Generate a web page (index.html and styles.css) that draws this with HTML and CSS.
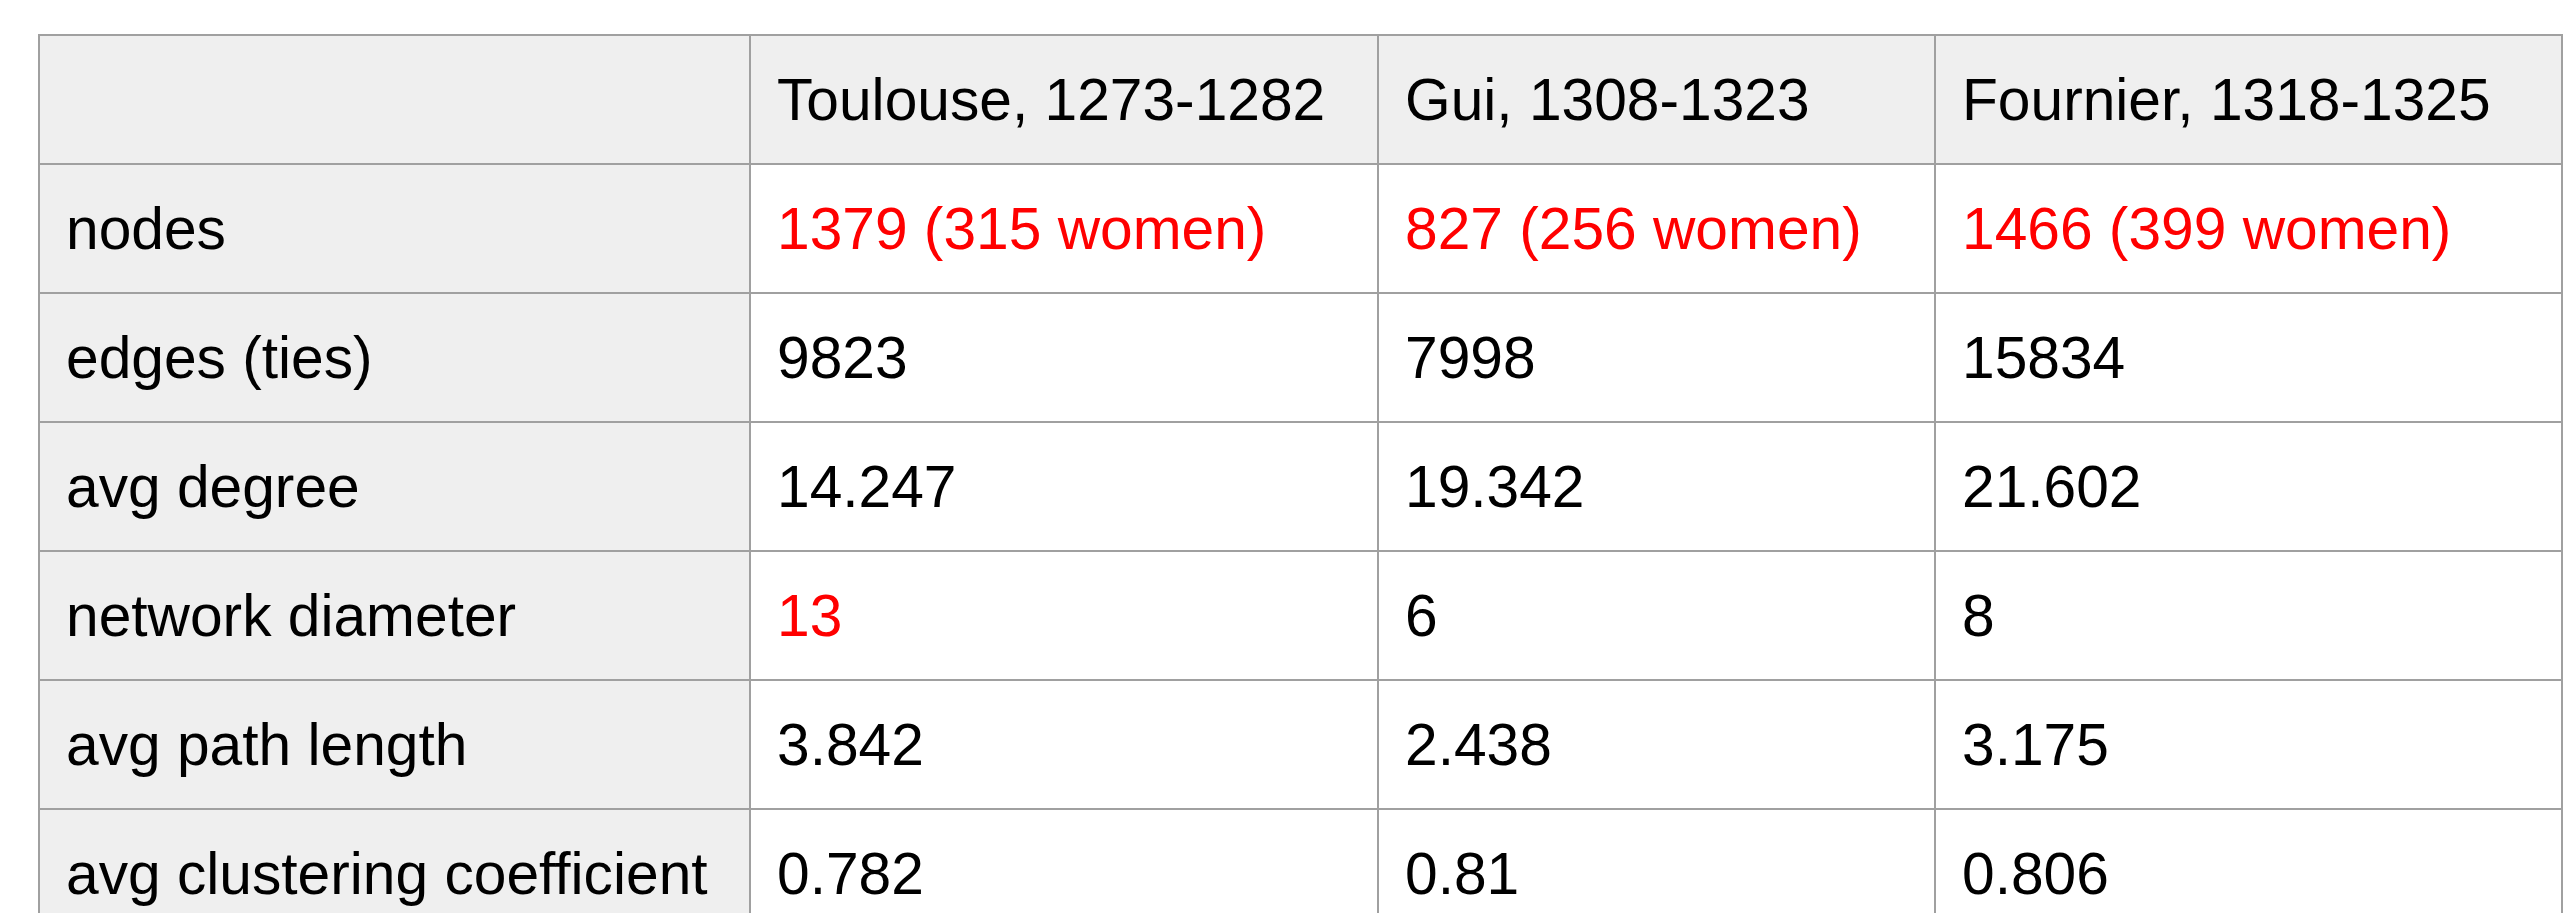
FILE: index.html
```html
<!DOCTYPE html>
<html lang="en">
<head>
<meta charset="utf-8">
<title>Network statistics</title>
<link rel="stylesheet" href="styles.css">
</head>
<body>
<div class="page">
  <table class="stats">
    <colgroup>
      <col class="c-label">
      <col class="c-toulouse">
      <col class="c-gui">
      <col class="c-fournier">
    </colgroup>
    <thead>
      <tr>
        <th class="label"></th>
        <th>Toulouse, 1273-1282</th>
        <th>Gui, 1308-1323</th>
        <th>Fournier, 1318-1325</th>
      </tr>
    </thead>
    <tbody>
      <tr>
        <th class="label">nodes</th>
        <td class="hl">1379 (315 women)</td>
        <td class="hl">827 (256 women)</td>
        <td class="hl">1466 (399 women)</td>
      </tr>
      <tr>
        <th class="label">edges (ties)</th>
        <td>9823</td>
        <td>7998</td>
        <td>15834</td>
      </tr>
      <tr>
        <th class="label">avg degree</th>
        <td>14.247</td>
        <td>19.342</td>
        <td>21.602</td>
      </tr>
      <tr>
        <th class="label">network diameter</th>
        <td class="hl">13</td>
        <td>6</td>
        <td>8</td>
      </tr>
      <tr>
        <th class="label">avg path length</th>
        <td>3.842</td>
        <td>2.438</td>
        <td>3.175</td>
      </tr>
      <tr>
        <th class="label">avg clustering coefficient</th>
        <td>0.782</td>
        <td>0.81</td>
        <td>0.806</td>
      </tr>
    </tbody>
  </table>
</div>
</body>
</html>
```

FILE: styles.css
```css
html, body {
  margin: 0;
  padding: 0;
  background: #ffffff;
}

body {
  font-family: "Liberation Sans", Arial, sans-serif;
  color: #000000;
}

.page {
  padding: 34px 0 0 38px;
}

.stats {
  border-collapse: separate;
  border-spacing: 0;
  table-layout: fixed;
  width: 2525px;
  border-top: 2px solid #a0a0a0;
  border-left: 2px solid #a0a0a0;
  font-size: 58.7px;
}

.c-label { width: 711px; }
.c-toulouse { width: 628px; }
.c-gui { width: 557px; }
.c-fournier { width: 627px; }

.stats th,
.stats td {
  box-sizing: border-box;
  border-right: 2px solid #a0a0a0;
  border-bottom: 2px solid #a0a0a0;
  padding: 0 26px;
  line-height: 127px;
  height: 129px;
  font-weight: normal;
  text-align: left;
  vertical-align: middle;
  white-space: nowrap;
  overflow: hidden;
}

.stats thead th,
.stats th.label {
  background: #efefef;
}

.stats .hl {
  color: #ff0000;
}
```
